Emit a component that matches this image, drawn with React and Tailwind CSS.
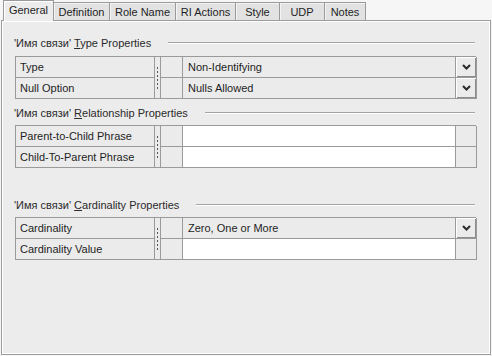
import React from 'react';

// ERwin-style relationship editor: tab strip + three property grids.
const TABS = [
  { label: 'General', w: 51 },
  { label: 'Definition', w: 57 },
  { label: 'Role Name', w: 67 },
  { label: 'RI Actions', w: 61 },
  { label: 'Style', w: 45 },
  { label: 'UDP', w: 46 },
  { label: 'Notes', w: 42 },
];

const Chevron = () => (
  <svg width="9" height="6" viewBox="0 0 9 6">
    <polyline points="1,1 4.5,4.5 8,1" fill="none" stroke="#2a2a2a" strokeWidth="2" />
  </svg>
);

function SectionHeader({ keyLetter, rest, className }) {
  return (
    <div className={`flex h-[14px] items-center pr-[15px] ${className}`}>
      <span className="ml-[-1px] whitespace-nowrap text-[#2a2a2a]">
        'Имя связи' <span className="underline underline-offset-1">{keyLetter}</span>
        {rest}
      </span>
      <div className="ml-[17px] h-[2px] flex-1 border-t border-[#a3a3a3] border-b border-b-white" />
    </div>
  );
}

function Splitter() {
  return (
    <div className="row-span-2 flex items-center justify-center border-r border-b border-[#9a9a9a] bg-[#ebebeb]">
      <div className="flex flex-col gap-[2px]">
        {[0, 1, 2, 3, 4, 5].map((i) => (
          <span key={i} className="h-[2px] w-[1px] bg-[#555]" />
        ))}
      </div>
    </div>
  );
}

function Cell({ children, className = '' }) {
  return <div className={`flex items-center border-r border-b border-[#9a9a9a] ${className}`}>{children}</div>;
}

function ButtonCell({ combo }) {
  return (
    <Cell className="bg-[#ebebeb]">
      {combo ? (
        <div className="flex h-full w-full items-center justify-center shadow-[inset_1px_1px_0_#ffffff,inset_-1px_-1px_0_#8d8d8d]">
          <Chevron />
        </div>
      ) : null}
    </Cell>
  );
}

function Grid({ rows, className = '' }) {
  // rows: [{ label, value, white, combo }]
  return (
    <div
      className={`grid w-[461px] grid-cols-[139px_6px_22px_273px_21px] grid-rows-[21px_21px] border-t border-l border-[#9a9a9a] ${className}`}
    >
      {rows.map((r, i) => (
        <React.Fragment key={r.label}>
          <Cell className="col-start-1 bg-[#ebebeb] pl-[4px]">{r.label}</Cell>
          {i === 0 && <Splitter />}
          <Cell className="col-start-3 bg-[#ebebeb]" />
          <Cell className={`pl-[5px] ${r.white ? 'bg-white' : 'bg-[#ebebeb]'}`}>{r.value}</Cell>
          <ButtonCell combo={r.combo} />
        </React.Fragment>
      ))}
    </div>
  );
}

export default function App() {
  return (
    <div
      className="flex h-[356px] w-[492px] flex-col bg-[#f6f6f6] text-[11px] leading-[13px] text-[#1e1e1e]"
      style={{ fontFamily: '"Liberation Sans", Arial, sans-serif' }}
    >
      <div className="flex h-[20px] items-end pl-[3px]">
        {TABS.map((t, i) =>
          i === 0 ? (
            <div
              key={t.label}
              style={{ width: t.w }}
              className="relative z-10 mb-[-1px] flex h-[21px] items-start justify-center border border-b-0 border-[#9a9a9a] bg-[#ececec] pt-[3px] shadow-[inset_1px_1px_0_#ffffff]"
            >
              {t.label}
            </div>
          ) : (
            <div
              key={t.label}
              style={{ width: t.w }}
              className="ml-[-1px] flex h-[18px] items-center justify-center border border-b-0 border-[#9a9a9a] bg-[#e2e2e2] pt-[1px] shadow-[inset_1px_1px_0_#f4f4f4]"
            >
              {t.label}
            </div>
          ),
        )}
      </div>

      <div className="ml-[1px] flex h-[335px] w-[490px] flex-col border border-[#9c9c9c] bg-[#ececec] pl-[13px] pt-[15px] shadow-[inset_0_0_0_1px_#ffffff]">
        <SectionHeader keyLetter="T" rest="ype Properties" />
        <Grid
          className="mt-[6px]"
          rows={[
            { label: 'Type', value: 'Non-Identifying', combo: true },
            { label: 'Null Option', value: 'Nulls Allowed', combo: true },
          ]}
        />

        <SectionHeader keyLetter="R" rest="elationship Properties" className="mt-[7px]" />
        <Grid
          className="mt-[5px]"
          rows={[
            { label: 'Parent-to-Child Phrase', value: '', white: true },
            { label: 'Child-To-Parent Phrase', value: '', white: true },
          ]}
        />

        <SectionHeader keyLetter="C" rest="ardinality Properties" className="mt-[30px]" />
        <Grid
          className="mt-[5px]"
          rows={[
            { label: 'Cardinality', value: 'Zero, One or More', combo: true },
            { label: 'Cardinality Value', value: '', white: true },
          ]}
        />
      </div>
    </div>
  );
}
